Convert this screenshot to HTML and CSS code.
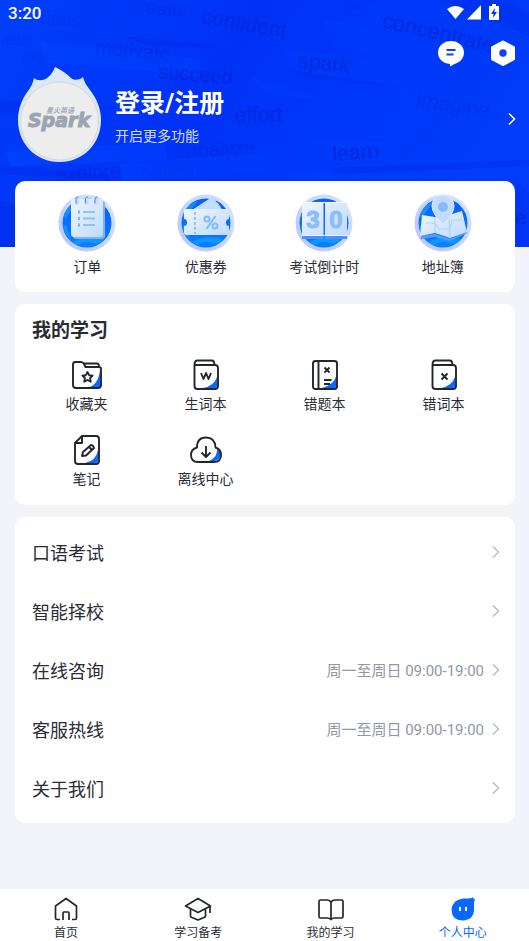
FILE: index.html
```html
<!DOCTYPE html>
<html lang="zh-CN">
<head>
<meta charset="utf-8">
<meta name="viewport" content="width=device-width, initial-scale=1">
<title>个人中心</title>
<link rel="stylesheet" href="styles.css">
</head>
<body>
<header class="hero">
  <svg class="hero-art" viewBox="0 0 529 247" preserveAspectRatio="xMidYMin slice" aria-hidden="true">
    <defs>
      <linearGradient id="sky" x1="0" x2="1" y1="0" y2="0.3"><stop offset="0" stop-color="#003ffb"/><stop offset="0.45" stop-color="#0032f6"/><stop offset="1" stop-color="#003cfa"/></linearGradient>
      <linearGradient id="slip" x1="0" x2="1"><stop offset="0" stop-color="#0046ff" stop-opacity=".6"/><stop offset="1" stop-color="#003cff" stop-opacity="0"/></linearGradient>
    </defs>
    <rect width="529" height="247" fill="url(#sky)"/>
    <g fill="url(#slip)">
      <path d="M366 5l163 40v20L373 32zM321 18l150 30v22L334 46zM284 48l145 20-40 20-97-17zM464 65l65 10v22l-56-6zM400 86l129 16v28l-122-18zM360 110l169 10v24l-162-6zM314 141l190 1v22l-181 3zM286 171l220-8v22l-214 4zM251 76l14 18 60 6-74-24zM40 42l160 16v18L46 62zM6 152l160-10v18L10 166zM120 164l150-12v20l-146 10z"/>
    </g>
    <g fill="#0018d8" opacity=".2">
      <path d="M440 0l89 36V12L500 0zM286 69l120 19-100-10zM0 100l140 8-140 6zM120 36l120 12-90-2zM330 168l199-8v6l-190 8zM0 165l110 10v6L0 174zM516 180l13 12v55h-13zM0 200l16 5v42H0z"/>
    </g>
    <g class="art-words">
      <text class="w-mid" transform="translate(130 12) rotate(6)" font-size="19">creativ</text>
      <text class="w-dark" transform="translate(201 23) rotate(10)" font-size="21">confident</text>
      <text class="w-dark" transform="translate(381 27) rotate(13)" font-size="22">concentrate</text>
      <text class="w-mid" transform="translate(345 9) rotate(2)" font-size="12">ge</text>
      <text class="w-soft" transform="translate(40 24) rotate(4)" font-size="19">rious</text>
      <text class="w-soft" transform="translate(1 44) rotate(3)" font-size="15">aster</text>
      <text class="w-soft" transform="translate(22 62) rotate(2)" font-size="16">skill</text>
      <text class="w-mid" transform="translate(95 54) rotate(5)" font-size="20">motivate</text>
      <text class="w-dark" transform="translate(158 78) rotate(5)" font-size="20">succeed</text>
      <text class="w-dark" transform="translate(298 67) rotate(7)" font-size="21">spark</text>
      <text class="w-mid" transform="translate(416 106) rotate(9)" font-size="21">imagine</text>
      <text class="w-dark" transform="translate(235 122) rotate(-1)" font-size="21">effort</text>
      <text class="w-mid" transform="translate(187 157) rotate(-2)" font-size="20">analyze</text>
      <text class="w-dark" transform="translate(333 161) rotate(-4)" font-size="21">learn</text>
      <text class="w-mid" transform="translate(56 181) rotate(-3)" font-size="20">explore</text>
      <text class="w-soft" transform="translate(141 180) rotate(-3)" font-size="20">patient</text>
      <text class="w-dark" transform="translate(516 225) rotate(-8)" font-size="20">e</text>
    </g>
  </svg>

  <div class="status">
    <span>3:20</span>
    <svg class="status-icons" viewBox="0 0 54 18" aria-hidden="true">
      <path fill="#fff" d="M0 5q8.500-6 17 0L8.500 15zM20 15.500L34 1v14.500z"/>
      <path fill="#fff" d="M45 0h4v2h3v14H42V2h3z"/>
      <path fill="#0034f5" d="M48 4l-4 6h2.500l-.5 4 4-6h-2.500z"/>
    </svg>
  </div>

  <div class="actions">
    <button class="icon-btn" type="button" aria-label="消息">
      <svg width="28" height="28" viewBox="0 0 28 28"><path fill="#fff" d="M14 2c7.300 0 13 4.900 13 11.500 0 5.600-4 10-9.500 11.500L13 27.500V25C6 24.500 1 19.800 1 13.500 1 6.900 6.700 2 14 2z"/><path stroke="#0a42f5" stroke-width="2" d="M9.500 11h9M9.500 15.500h7"/></svg>
    </button>
    <button class="icon-btn" type="button" aria-label="设置">
      <svg width="28" height="28" viewBox="0 0 28 28"><path fill="#fff" stroke="#fff" stroke-width="3" stroke-linejoin="round" d="M14 3l10.500 5.500v11.500L14 25.500 3.500 20V8.500z"/><circle cx="14" cy="14" r="3.700" fill="#0a42f5"/></svg>
    </button>
  </div>

  <a class="profile" href="#login">
    <svg class="avatar" width="84" height="96" viewBox="0 0 84 96" role="img" aria-label="Spark">
      <path fill="#dce7fc" d="M37 0c7 3 12 7 16 11 3 3 9 2 12-1 1 5 4 9 7 13 7 9 11 19 11 30 0 24-18 42-41.500 42S0 77 0 53c0-11 4-21 10-29 3-4 5-8 6-13 3 3 9 3 13 0 4-3 6-6 8-11z"/>
      <circle cx="41.500" cy="54" r="39" fill="#ededee" stroke="#d4d6dc"/>
      <text class="logo-cn" x="28" y="46">星火英语</text>
      <text class="logo-en" x="41" y="60" text-anchor="middle">Spark</text>
    </svg>
    <span class="profile-text">
      <strong>登录/注册</strong>
      <span>开启更多功能</span>
    </span>
    <svg width="8" height="14" viewBox="0 0 8 14" aria-hidden="true"><path d="M1 1.500L6.500 7 1 12.500" fill="none" stroke="#fff" stroke-width="1.600"/></svg>
  </a>
</header>

<main class="content">
  <svg class="defs" width="0" height="0" aria-hidden="true">
    <defs>
      <linearGradient id="ring" x1="0" x2="1" y1="1" y2="0"><stop offset="0" stop-color="#b9c3fb"/><stop offset="1" stop-color="#d6e6fe"/></linearGradient>
      <linearGradient id="disc" x1="0" x2="0" y1="0" y2="1"><stop offset="0" stop-color="#0b5cff"/><stop offset="1" stop-color="#0880ff"/></linearGradient>
      <linearGradient id="paper" x1="0" x2="1" y1="0" y2="1"><stop offset="0" stop-color="#eef6ff"/><stop offset="1" stop-color="#bfdaff"/></linearGradient>
      <g id="badge">
        <circle cx="29" cy="29" r="28.500" fill="url(#ring)"/>
        <circle cx="29" cy="29" r="24.500" fill="url(#disc)"/>
        <path d="M6 21q5-12 15-14-6 7-14 18zM15 48q12-7 31-3-5 6-11 4-8-3-15 2zM5 32q2 9 8 14l-5-15z" fill="#16a2ff" opacity=".7"/>
      </g>
    </defs>
  </svg>

  <nav class="card shortcuts" aria-label="快捷入口">
    <a href="#orders">
      <svg width="58" height="58" viewBox="0 0 58 58"><use href="#badge"/><rect x="15" y="7" width="32" height="38" rx="3" fill="#83aef8"/><rect x="13" y="5" width="32" height="38" rx="3" fill="url(#paper)"/><path d="M25 18h12M25 24.500h12M25 31h12" stroke="#8fc0fb" stroke-width="1.800"/><path d="M20 18h2M20 24.500h2M20 31h2" stroke="#78b2fb" stroke-width="3"/><g fill="none" stroke-linecap="round"><path d="M19 4v5M28.500 4v5M38 4v5" stroke="#c7dcff" stroke-width="4"/><path d="M18 9V5q0-2 2-2M27.500 9V5q0-2 2-2M37 9V5q0-2 2-2" stroke="#4288f5"/></g></svg>
      <span>订单</span>
    </a>
    <a href="#coupons">
      <svg width="58" height="58" viewBox="0 0 58 58"><use href="#badge"/><path d="M15 16L35 3q3-1 4 2-1 3 2 4l5 8z" fill="#c0dcff"/><path d="M9 15h41q2 0 2 2v8q-3 0-3 3.500t3 3.500v7q0 2-2 2H9q-2 0-2-2v-7q3 0 3-3.500T7 25v-8q0-2 2-2z" fill="url(#paper)"/><path d="M18 18v22" stroke="#83b7fb" stroke-width="1.500" stroke-dasharray="3 2"/><g fill="none" stroke="#82b8fc" stroke-width="2"><circle cx="30" cy="25" r="2.500"/><circle cx="38" cy="32" r="2.500"/><path d="M38.500 22L29.500 35"/></g></svg>
      <span>优惠券</span>
    </a>
    <a href="#countdown">
      <svg width="58" height="58" viewBox="0 0 58 58"><use href="#badge"/><path d="M7 42h22v3H7zM30 42h22v3H30z" fill="#4e91f7"/><path d="M7 8h21.500v34H7zM30 8h22v34H30z" fill="url(#paper)"/><path d="M7 8h45v1H7zM7 41h45v1H7z" fill="#f2f8ff"/><text class="digit" x="18" y="34" text-anchor="middle">3</text><text class="digit" x="41" y="34" text-anchor="middle">0</text></svg>
      <span>考试倒计时</span>
    </a>
    <a href="#addresses">
      <svg width="58" height="58" viewBox="0 0 58 58"><use href="#badge"/><path d="M7 42l14-2 15 5 17-8v2l-17 8-15-4-14 2z" fill="#5b9af7"/><path d="M8 21l13 2 14-2 13-4 5 21-17 6-15-5-15 3z" fill="url(#paper)"/><path d="M21 23v16M35 22l1 22M12 29h9l4 6h11l2-9h11" fill="none" stroke="#b4d4fb" stroke-width="1.200"/><path d="M29 30Q18 20 18 12a11 11 0 0 1 22 0q0 8-11 18z" fill="#c3dbff" stroke="#e2eeff"/><circle cx="29" cy="13" r="5" fill="#84bcff"/></svg>
      <span>地址簿</span>
    </a>
  </nav>

  <section class="card study">
    <h2>我的学习</h2>
    <div class="study-grid">
      <a href="#favorites">
        <svg class="line" viewBox="0 0 36 36"><path class="blue" d="M31 12v17q0 2-2 2H18q12-3 13-19z"/><path d="M6.500 5h5.500q2 0 3 2l1.500 3H30q2 0 2 2v16q0 3-3 3H7q-3 0-3-3V7.500Q4 5 6.500 5zM14.500 6.500H28q2 0 2 3"/><path d="M18.500 15l1.600 3.200 3.500.5-2.500 2.500.6 3.500-3.200-1.700-3.200 1.700.6-3.500-2.500-2.500 3.500-.5z"/></svg>
        <span>收藏夹</span>
      </a>
      <a href="#words">
        <svg class="line" viewBox="0 0 36 36"><path class="blue" d="M29 20v9q0 2-2 2H15q11-2 14-11z"/><path d="M6.500 8q0-4.500 3-4.500H24q2 0 2.500 3.500M6.500 8H27q3 0 3 3v18q0 3-3 3H9.500q-3 0-3-3z"/><path d="M13 16l2.500 6 2.500-6 2.500 6 2.500-6"/></svg>
        <span>生词本</span>
      </a>
      <a href="#mistakes">
        <svg class="line" viewBox="0 0 36 36"><path class="blue" d="M29.500 18v11q0 2-2 2H15q12-3 14.500-13z"/><rect x="6" y="4" width="24" height="28" rx="2.500"/><path d="M11.500 4v28M17.500 10.500l5 5M22.500 10.500l-5 5M17 23h7.500M17 27h6"/></svg>
        <span>错题本</span>
      </a>
      <a href="#wrong-words">
        <svg class="line" viewBox="0 0 36 36"><path class="blue" d="M29 20v9q0 2-2 2H15q11-2 14-11z"/><path d="M6.500 8q0-4.500 3-4.500H24q2 0 2.500 3.500M6.500 8H27q3 0 3 3v18q0 3-3 3H9.500q-3 0-3-3z"/><path d="M15.500 16.500l6 6M21.500 16.500l-6 6"/></svg>
        <span>错词本</span>
      </a>
      <a href="#notes">
        <svg class="line" viewBox="0 0 36 36"><path class="blue" d="M29 18v11q0 2-2 2H16q11-2 13-13z"/><path d="M13 4h14q3 0 3 3v22q0 3-3 3H9q-3 0-3-3V11zM13 4v7H6"/><path d="M14 20l8-7q2 0 3 3l-8 7.500-4 .5zM20 15l3 3"/></svg>
        <span>笔记</span>
      </a>
      <a href="#offline">
        <svg class="line" viewBox="0 0 36 36"><path class="blue" d="M29 16q5 4 3 9-2 4-6 4h-5q9-4 8-13z"/><path d="M10 30q-7 0-7-7 0-6 6-7.500 0-10 9-10t9.500 10Q33 17 33 23q0 7-7 7zM18 14v11M13.500 20.500L18 25l4.500-4.500"/></svg>
        <span>离线中心</span>
      </a>
    </div>
  </section>

  <ul class="card links">
    <li><a href="#oral"><span>口语考试</span><svg class="chev" viewBox="0 0 8 14"><path d="M1 1.500L6.500 7 1 12.500"/></svg></a></li>
    <li><a href="#schools"><span>智能择校</span><svg class="chev" viewBox="0 0 8 14"><path d="M1 1.500L6.500 7 1 12.500"/></svg></a></li>
    <li><a href="#chat"><span>在线咨询</span><small>周一至周日 09:00-19:00</small><svg class="chev" viewBox="0 0 8 14"><path d="M1 1.500L6.500 7 1 12.500"/></svg></a></li>
    <li><a href="#hotline"><span>客服热线</span><small>周一至周日 09:00-19:00</small><svg class="chev" viewBox="0 0 8 14"><path d="M1 1.500L6.500 7 1 12.500"/></svg></a></li>
    <li><a href="#about"><span>关于我们</span><svg class="chev" viewBox="0 0 8 14"><path d="M1 1.500L6.500 7 1 12.500"/></svg></a></li>
  </ul>
</main>

<nav class="tabs" aria-label="主导航">
  <a href="#home"><svg viewBox="0 0 28 28"><path d="M8 24.500H5q-1.500 0-1.500-1.500V11L14 3.500 24.500 11v12q0 1.500-1.500 1.500h-3M11 25v-7q0-1 1-1h4q1 0 1 1v7"/></svg><span>首页</span></a>
  <a href="#prepare"><svg viewBox="0 0 28 28"><path d="M14 3.500L26.500 11 14 17.500 1.500 11zM6.500 14v7q0 1 1.500 1.500l6 2.500 6-2.500q1.500-.5 1.500-1.500v-7M26 11v7"/></svg><span>学习备考</span></a>
  <a href="#study"><svg viewBox="0 0 28 28"><path d="M14 7.500Q13 5 10 5H3.500Q2 5 2 6.500v15Q2 23 3.500 23H10q3 0 4 1.500Q15 23 18 23h6.500q1.500 0 1.500-1.500v-15Q26 5 24.500 5H18q-3 0-4 2.500zV24"/></svg><span>我的学习</span></a>
  <a class="active" href="#me" aria-current="page"><svg viewBox="0 0 28 28"><path class="solid" d="M14 3.500q3 0 5 0 3 0 5.500-1.500l-.5 2 2-.5Q24.500 8 25 14q0 11-11.500 11.500Q3 25.500 2.500 15 3 5 14 3.500z"/><path class="eye" d="M11 12v4M17 12v4"/></svg><span>个人中心</span></a>
</nav>
</body>
</html>
```
FILE: styles.css
```css
* { box-sizing: border-box; }

body {
  margin: 0;
  min-height: 100vh;
  display: flex;
  flex-direction: column;
  background: #f3f4f9;
  color: #292c35;
  font-family: Roboto, "Noto Sans CJK SC", sans-serif;
}

a { color: inherit; text-decoration: none; }
svg { display: block; flex: none; }

/* Header */
.hero {
  position: relative;
  padding-bottom: 84px;
  background: #0034f5;
  color: #fff;
}
.hero-art {
  position: absolute;
  inset: 0;
  width: 100%;
  height: 100%;
}
.art-words { font-family: "Liberation Sans", sans-serif; fill: #0018c8; }
.w-dark { opacity: .45; }
.w-mid { opacity: .25; }
.w-soft { opacity: .14; }

.status, .actions, .profile { position: relative; display: flex; align-items: center; }
.status {
  justify-content: space-between;
  height: 26px;
  padding: 0 28px 0 8px;
  font-size: 17px;
  font-weight: 500;
}
.status-icons { width: 54px; height: 18px; }
.actions {
  justify-content: flex-end;
  gap: 24px;
  height: 49px;
  padding: 4px 12px 0 0;
}
.icon-btn { padding: 0; border: 0; background: none; cursor: pointer; }
.profile { gap: 13px; padding: 0 13px 0 18px; }
.avatar { margin-top: -8px; }
.profile-text {
  flex: 1;
  display: flex;
  flex-direction: column;
  gap: 3px;
  padding-bottom: 4px;
  font-size: 14px;
  line-height: 24px;
  color: #d3deff;
}
.profile-text strong { font-size: 25px; line-height: 34px; color: #fff; }
.logo-cn { font: italic 700 7px "Noto Sans CJK SC", sans-serif; fill: #a4abb7; }
.logo-en { font: italic 700 19px "DejaVu Sans", sans-serif; fill: #9ba4b2; stroke: #9ba4b2; }

/* Cards */
.content {
  position: relative;
  display: flex;
  flex-direction: column;
  gap: 12px;
  margin-top: -66px;
  padding: 0 14px 65px 15px;
}
.defs { position: absolute; }
.card { margin: 0; border-radius: 10px; background: #fff; }

.shortcuts, .study-grid { display: grid; grid-template-columns: repeat(4, 1fr); }
.shortcuts a, .study-grid a {
  display: flex;
  flex-direction: column;
  align-items: center;
  font-size: 14px;
  line-height: 20px;
}
.shortcuts { padding: 13px; }
.shortcuts a { gap: 5px; padding-bottom: 2px; }
.digit { font: 700 24px "Liberation Sans", sans-serif; fill: #8abdfa; stroke: #8abdfa; }

.study { padding: 13px 12px 16px; }
.study h2 { margin: 0 5px 12px; font-size: 19px; line-height: 28px; }
.study-grid { row-gap: 18px; }
.study-grid a { gap: 1px; }
.line { width: 36px; height: 36px; fill: none; stroke: #23262f; stroke-width: 1.900; stroke-linejoin: round; }
.line .blue { fill: #0868ff; stroke: none; }

.links { padding: 5px 15px 6px 17px; list-style: none; }
.links a { display: flex; align-items: center; gap: 8px; height: 59px; font-size: 18px; }
.links span { flex: 1; }
.links small { font-size: 15px; color: #9297a5; }
.chev { width: 8px; height: 14px; fill: none; stroke: #b9bdc9; stroke-width: 1.500; }

/* Bottom tabs */
.tabs {
  display: grid;
  grid-template-columns: repeat(4, 1fr);
  margin-top: auto;
  padding: 6px 0 0;
  background: #fff;
}
.tabs a { display: flex; flex-direction: column; align-items: center; gap: 3px; font-size: 12px; line-height: 15px; }
.tabs svg { width: 28px; height: 28px; fill: none; stroke: #23262f; stroke-width: 1.700; stroke-linejoin: round; }
.tabs .active { color: #0868ff; }
.tabs .solid { fill: #0868ff; stroke: none; }
.tabs .eye { stroke: #fff; stroke-width: 2; }
```
